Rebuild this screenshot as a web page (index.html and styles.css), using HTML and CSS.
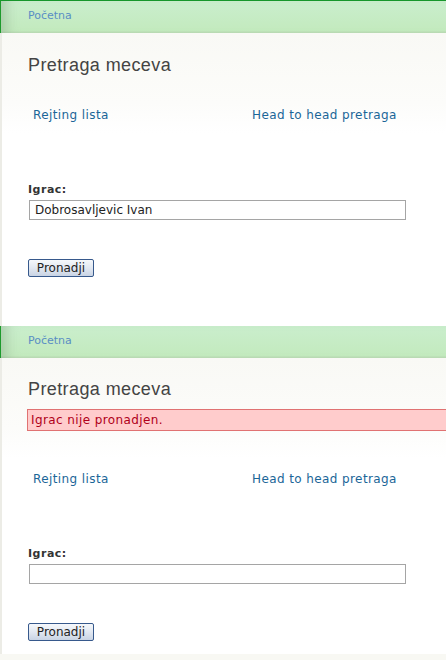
FILE: index.html
```html
<!DOCTYPE html>
<html>
<head>
<meta charset="utf-8">
<link rel="stylesheet" href="styles.css">
</head>
<body>
<div class="page">
  <section class="shot shot-first">
    <div class="crumbbar crumbbar-top"><a class="crumb" href="#">Početna</a></div>
    <div class="content">
      <h1 class="title">Pretraga meceva</h1>
      <div class="links">
        <a class="link" href="#">Rejting lista</a>
        <a class="link" href="#">Head to head pretraga</a>
      </div>
      <label class="label">Igrac:</label>
      <div class="field"><span class="field-text">Dobrosavljevic Ivan</span></div>
      <button class="btn">Pronadji</button>
    </div>
  </section>
  <section class="shot shot-second">
    <div class="crumbbar"><a class="crumb" href="#">Početna</a></div>
    <div class="content content-error">
      <h1 class="title">Pretraga meceva</h1>
      <div class="error">Igrac nije pronadjen.</div>
      <div class="links links-after-error">
        <a class="link" href="#">Rejting lista</a>
        <a class="link" href="#">Head to head pretraga</a>
      </div>
      <label class="label">Igrac:</label>
      <div class="field"><span class="field-text"></span></div>
      <button class="btn">Pronadji</button>
    </div>
  </section>
  <div class="tail"></div>
</div>
</body>
</html>
```
FILE: styles.css
```css
html, body {
  margin: 0;
  padding: 0;
  background: #ffffff;
  overflow: hidden;
}
.page {
  width: 446px;
  overflow: hidden;
  font-family: "DejaVu Sans", Verdana, sans-serif;
}
.shot {
  display: flex;
  flex-direction: column;
  overflow: hidden;
}
.crumbbar {
  height: 32px;
  box-sizing: border-box;
  padding-left: 27px;
  display: flex;
  align-items: center;
  background: linear-gradient(#caeecd, #c3eabe 92%, #b9d9b3 100%);
  border-left: 1px solid #1d9a2c;
  box-shadow: inset 14px 0 12px -8px rgba(120, 150, 120, 0.35);
}
.crumbbar-top {
  height: 33px;
  border-top: 1px solid #16962b;
}
.crumb {
  font-size: 11px;
  color: #5a8ec4;
  text-decoration: none;
  line-height: 14px;
  margin-top: -3px;
}
.content {
  border-left: 2px solid #ecece6;
  background: linear-gradient(#f9f9f5, #fcfcfa 70px, #ffffff 100px);
  padding: 21px 0 49px 26px;
  display: flex;
  flex-direction: column;
  align-items: flex-start;
  overflow: hidden;
}
.content-error {
  padding-top: 20px;
  padding-bottom: 13px;
}
.title {
  margin: 0;
  font-family: "Liberation Sans", Arial, sans-serif;
  font-weight: normal;
  font-size: 18px;
  letter-spacing: 0.4px;
  line-height: 22px;
  color: #444444;
}
.error {
  box-sizing: border-box;
  margin: 9px 0 0 -1px;
  width: 440px;
  height: 22px;
  padding-left: 3px;
  background: #ffcccc;
  border: 1px solid #e07272;
  color: #b0001a;
  font-size: 12px;
  letter-spacing: 0.4px;
  line-height: 20px;
}
.links {
  margin-top: 31px;
  padding-left: 5px;
  display: grid;
  grid-template-columns: 219px auto;
}
.links-after-error {
  margin-top: 40px;
}
.link {
  font-size: 12px;
  letter-spacing: 0.4px;
  line-height: 16px;
  color: #1b6698;
  text-decoration: none;
}
.label {
  margin-top: 60px;
  font-size: 11px;
  font-weight: bold;
  letter-spacing: 0.5px;
  line-height: 14px;
  color: #333333;
}
.field {
  margin-top: 3px;
  margin-left: 1px;
  box-sizing: border-box;
  width: 377px;
  height: 20px;
  border: 1px solid #a5a5a5;
  background: #ffffff;
  padding-left: 5px;
  display: flex;
  align-items: center;
}
.field-text {
  font-size: 12px;
  color: #222222;
  line-height: 16px;
}
.btn {
  margin-top: 39px;
  box-sizing: border-box;
  width: 66px;
  height: 18px;
  padding: 0;
  border: 1px solid #37598c;
  border-radius: 2px;
  background: linear-gradient(#f6f8fb, #e2e8f1 50%, #c9d4e4);
  font-family: "DejaVu Sans", Verdana, sans-serif;
  font-size: 12px;
  line-height: 14px;
  color: #222222;
}
.tail {
  height: 6px;
  background: #f8f8f3;
}
```
